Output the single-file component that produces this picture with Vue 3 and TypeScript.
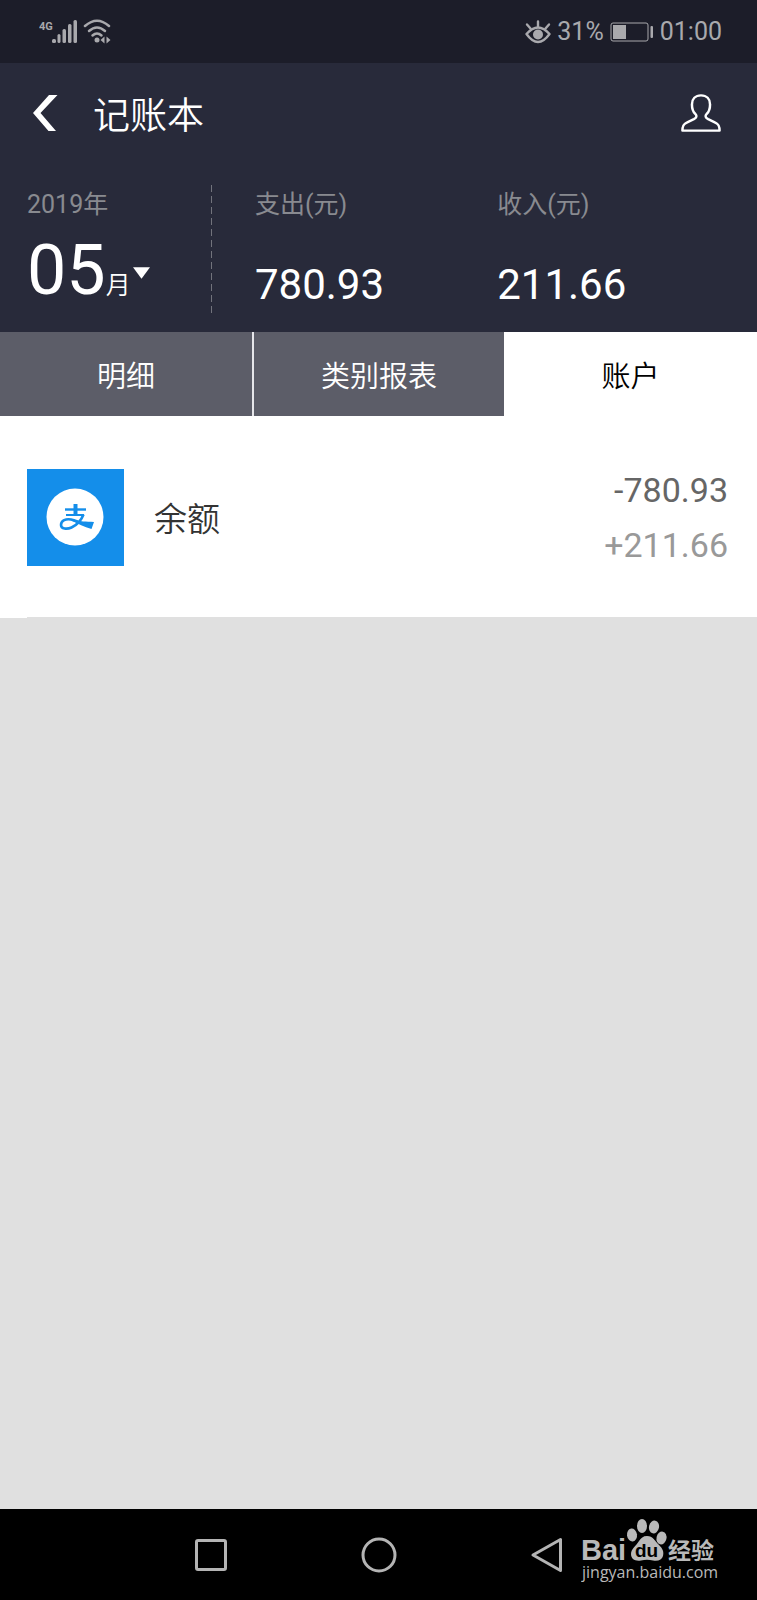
<script setup lang="ts">
import { ref } from 'vue'

interface Total {
  label: string
  value: string
}

interface Account {
  name: string
  expense: string
  income: string
}

const year = '2019年'
const month = '05'
const totals: Total[] = [
  { label: '支出(元)', value: '780.93' },
  { label: '收入(元)', value: '211.66' },
]
const tabs: string[] = ['明细', '类别报表', '账户']
const activeTab = ref<number>(2)
const accounts: Account[] = [{ name: '余额', expense: '-780.93', income: '+211.66' }]
</script>

<template>
  <div class="screen">
    <div class="status">
      <div class="status-group">
        <svg class="signal" viewBox="0 0 74 26" aria-hidden="true">
          <text x="0" y="11" class="network">4G</text>
          <g fill="#a9a9ad">
            <rect x="13" y="20" width="4" height="4" rx="1.5" />
            <rect x="18.500" y="15" width="3" height="9" rx="1.5" />
            <rect x="23.500" y="10" width="3.500" height="14" rx="1.5" />
            <rect x="29" y="5" width="3.500" height="19" rx="1.5" />
            <rect x="34.500" y="1" width="3.500" height="23" rx="1.5" />
            <circle cx="58" cy="21" r="2.500" />
            <path d="M65.500 17.500v7l-4-3.500zM67.500 17.500v7l4-3.500z" />
          </g>
          <g fill="none" stroke="#a9a9ad" stroke-width="2.500" stroke-linecap="round">
            <path d="M46 7Q58 -3.500 70 7" />
            <path d="M50 12Q58 5 66 12" />
            <path d="M53.500 16.500Q58 12.500 62.500 16.500" />
          </g>
        </svg>
      </div>
      <div class="status-group">
        <svg class="eye" viewBox="0 0 26 24" aria-hidden="true">
          <path d="M1.500 14Q13 1 24.500 14Q13 30 1.500 14z" fill="none" stroke="#a9a9ad" stroke-width="2.400" stroke-linejoin="round" />
          <path d="M13 1.500v5M2 4.500l3.500 4M24 4.500l-3.500 4" fill="none" stroke="#a9a9ad" stroke-width="2.400" stroke-linecap="round" />
          <circle cx="13" cy="14.500" r="5" fill="#a9a9ad" />
        </svg>
        <span>31%</span>
        <svg class="battery" viewBox="0 0 44 20" aria-hidden="true">
          <rect x="1" y="1" width="37" height="18" rx="2" fill="none" stroke="#a9a9ad" />
          <rect x="3" y="3" width="13" height="14" fill="#a9a9ad" />
          <rect x="40.500" y="4" width="2.500" height="12" rx="1" fill="#a9a9ad" />
        </svg>
        <span>01:00</span>
      </div>
    </div>

    <header class="header">
      <div class="title-bar">
        <button class="icon-button" type="button" aria-label="返回">
          <svg class="back" viewBox="0 0 26 36" aria-hidden="true">
            <path d="M17 0h8.500L8.500 18L24 36h-7.500L1 18z" fill="#fff" />
          </svg>
        </button>
        <h1>记账本</h1>
        <button class="icon-button profile" type="button" aria-label="个人">
          <svg class="person" viewBox="0 0 42 40" aria-hidden="true">
            <path
              d="M21 1.500C15 1.500 11.500 5.500 11.500 11C11.500 16 12.500 18.500 15 21C17 23 16.500 25 13.500 26.500L6 30C2.500 31.500 1.500 33.500 1.500 38.500H40.500C40.500 33.500 39.500 31.500 36 30L28.500 26.500C25.500 25 25 23 27 21C29.500 18.500 30.500 16 30.500 11C30.500 5.500 27 1.500 21 1.500z"
              fill="none"
              stroke="#fff"
              stroke-width="2.600"
              stroke-linejoin="round"
            />
          </svg>
        </button>
      </div>

      <div class="summary">
        <div class="period">
          <span class="label">{{ year }}</span>
          <button class="month" type="button" aria-label="选择月份">
            <span class="month-number">{{ month }}</span>
            <span class="month-unit">月</span>
            <svg class="caret" viewBox="0 0 18 12" aria-hidden="true">
              <path d="M0 0h18L9 12z" fill="#fff" />
            </svg>
          </button>
        </div>
        <div v-for="total in totals" :key="total.label" class="total">
          <span class="label">{{ total.label }}</span>
          <span class="value">{{ total.value }}</span>
        </div>
      </div>
    </header>

    <nav class="tabs" role="tablist">
      <button
        v-for="(tab, index) in tabs"
        :key="tab"
        type="button"
        role="tab"
        class="tab"
        :class="{ active: index === activeTab }"
        :aria-selected="index === activeTab"
        @click="activeTab = index"
      >
        {{ tab }}
      </button>
    </nav>

    <main class="accounts">
      <div v-for="account in accounts" :key="account.name" class="account">
        <svg class="account-logo" viewBox="0 0 97 97" aria-hidden="true">
          <rect width="97" height="97" fill="#148eea" />
          <circle cx="48" cy="48" r="28.500" fill="#fff" />
          <g fill="none" stroke="#148eea">
            <path d="M38 40.500H59" stroke-width="2.400" />
            <path d="M48.500 35V46" stroke-width="4" />
            <path d="M39 46H57" stroke-width="2" />
            <path d="M56.500 45.500C54 52 50 56 44.500 58.500C40 60.500 34 60 34 56C34 51.500 39 49.500 44 50.500C50 52 56 55 63 56" stroke-width="2.600" />
          </g>
          <path d="M45 50C53 53 59 52.500 67 53L64.500 60C57 58 51 54.500 45 52z" fill="#148eea" />
        </svg>
        <span class="account-name">{{ account.name }}</span>
        <div class="amounts">
          <span class="expense">{{ account.expense }}</span>
          <span class="income">{{ account.income }}</span>
        </div>
      </div>
    </main>

    <footer class="system-bar">
      <button class="icon-button" type="button" aria-label="最近任务">
        <svg class="key" viewBox="0 0 36 36" aria-hidden="true">
          <rect x="3.500" y="3.500" width="29" height="29" rx="1.500" fill="none" stroke="#b4b4b4" stroke-width="3" />
        </svg>
      </button>
      <button class="icon-button" type="button" aria-label="主页">
        <svg class="key" viewBox="0 0 36 36" aria-hidden="true">
          <circle cx="18" cy="18" r="16" fill="none" stroke="#b4b4b4" stroke-width="3" />
        </svg>
      </button>
      <button class="icon-button" type="button" aria-label="返回上一页">
        <svg class="key" viewBox="0 0 36 36" aria-hidden="true">
          <path d="M31.500 2.500V33.500L4 18z" fill="none" stroke="#b4b4b4" stroke-width="3" stroke-linejoin="round" />
        </svg>
      </button>
      <svg class="watermark" viewBox="0 0 140 68" role="img" aria-label="Baidu经验">
        <g fill="#b9b9b9">
          <ellipse cx="51" cy="17" rx="5" ry="6.500" transform="rotate(-8 51 17)" />
          <ellipse cx="61" cy="8" rx="5" ry="7" />
          <ellipse cx="73" cy="9" rx="5" ry="6.500" transform="rotate(12 73 9)" />
          <ellipse cx="80.500" cy="20" rx="5" ry="6.500" transform="rotate(12 80.500 20)" />
          <path d="M66 18C72 18 74 23 78 27C82 31 83 34 82 38C81 42 77 43.500 72 42.500C68 41.500 64 41.500 60 42.500C54 43.500 50 41 50 36C50 31 55 28 58 23C60 20 62 18 66 18z" />
        </g>
        <text x="0" y="42" class="mark-latin">Bai</text>
        <text x="54" y="39" class="mark-du">du</text>
        <text x="87" y="41" class="mark-cjk">经验</text>
        <text x="1" y="60" class="mark-url">jingyan.baidu.com</text>
      </svg>
    </footer>
  </div>
</template>

<style>
body {
  margin: 0;
}
</style>

<style scoped>
.screen {
  display: flex;
  flex-direction: column;
  min-height: 100vh;
  background: #e0e0e0;
  font-family: Roboto, 'Noto Sans CJK SC', sans-serif;
  color: #fff;
}

button {
  margin: 0;
  padding: 0;
  border: 0;
  background: none;
  color: inherit;
  font: inherit;
  cursor: pointer;
}

svg {
  display: block;
}

.status {
  display: flex;
  align-items: center;
  justify-content: space-between;
  height: 63px;
  padding: 0 35px 0 39px;
  background: #1c1d29;
  color: #a9a9ad;
  font-size: 25px;
}

.status-group {
  display: flex;
  align-items: center;
  gap: 6px;
}

.signal {
  width: 74px;
  height: 26px;
}

.network {
  fill: #a9a9ad;
  font-size: 11px;
  font-weight: 700;
}

.eye {
  width: 26px;
  height: 24px;
}

.battery {
  width: 44px;
  height: 20px;
}

.header {
  background: #282a3a;
}

.title-bar {
  display: flex;
  align-items: center;
  height: 100px;
  padding: 0 36px 0 32px;
}

.title-bar h1 {
  margin: 0 0 0 35px;
  padding-top: 8px;
  font-size: 37px;
  font-weight: 350;
  line-height: 48px;
}

.back {
  width: 26px;
  height: 36px;
}

.profile {
  margin-left: auto;
}

.person {
  width: 40px;
  height: 40px;
}

.summary {
  display: grid;
  grid-template-columns: 28fr 32fr 40fr;
  height: 169px;
}

.period,
.total {
  display: flex;
  flex-direction: column;
  padding-top: 24px;
}

.period {
  position: relative;
  align-items: flex-start;
  padding-left: 27px;
}

.period::after {
  content: '';
  position: absolute;
  top: 22px;
  right: 0;
  bottom: 20px;
  width: 1px;
  background: repeating-linear-gradient(#72737c 0 7px, transparent 7px 11px);
}

.total {
  padding-left: 43px;
}

.label {
  color: #898a90;
  font-size: 25px;
  line-height: 36px;
}

.month {
  display: flex;
  align-items: baseline;
  line-height: 94px;
}

.month-number {
  font-size: 70px;
}

.month-unit {
  font-size: 25px;
  font-weight: 350;
}

.caret {
  align-self: center;
  width: 17px;
  height: 12px;
  margin-bottom: 10px;
  margin-left: 2px;
}

.value {
  margin-top: 34px;
  font-size: 42px;
  line-height: 56px;
}

.tabs {
  display: grid;
  grid-template-columns: 254fr 250fr 253fr;
  height: 84px;
}

.tab {
  background: #5c5d68;
  font-size: 29px;
  font-weight: 350;
}

.tab:first-child {
  border-right: 2px solid #e6e6ea;
}

.tab.active {
  background: #fff;
  color: #000;
}

.accounts {
  flex: 1;
}

.account {
  display: flex;
  align-items: center;
  padding: 45px 29px 45px 27px;
  background: linear-gradient(#e0e0e0, #e0e0e0) 27px 100% / 100% 1px no-repeat #fff;
}

.account-logo {
  width: 97px;
  height: 97px;
}

.account-name {
  margin-left: 30px;
  color: #333;
  font-size: 33px;
  font-weight: 350;
}

.amounts {
  display: flex;
  flex-direction: column;
  margin-left: auto;
  padding-top: 2px;
  font-size: 34px;
  line-height: 55px;
  text-align: right;
}

.expense {
  color: #666;
}

.income {
  color: #999;
}

.system-bar {
  position: relative;
  display: flex;
  align-items: center;
  justify-content: center;
  gap: 132px;
  height: 91px;
  background: #000;
}

.key {
  width: 36px;
  height: 36px;
}

.watermark {
  position: absolute;
  top: 9px;
  right: 36px;
  width: 140px;
  height: 68px;
}

.watermark text {
  fill: #b9b9b9;
}

.watermark .mark-latin {
  font-family: 'Liberation Sans', sans-serif;
  font-size: 29px;
  font-weight: 700;
}

.watermark .mark-du {
  fill: #000;
  font-family: 'Liberation Sans', sans-serif;
  font-size: 19px;
  font-weight: 700;
}

.watermark .mark-cjk {
  font-family: 'Noto Sans CJK SC', sans-serif;
  font-size: 23px;
  font-weight: 700;
}

.watermark .mark-url {
  font-family: 'Open Sans', sans-serif;
  font-size: 16px;
}
</style>
